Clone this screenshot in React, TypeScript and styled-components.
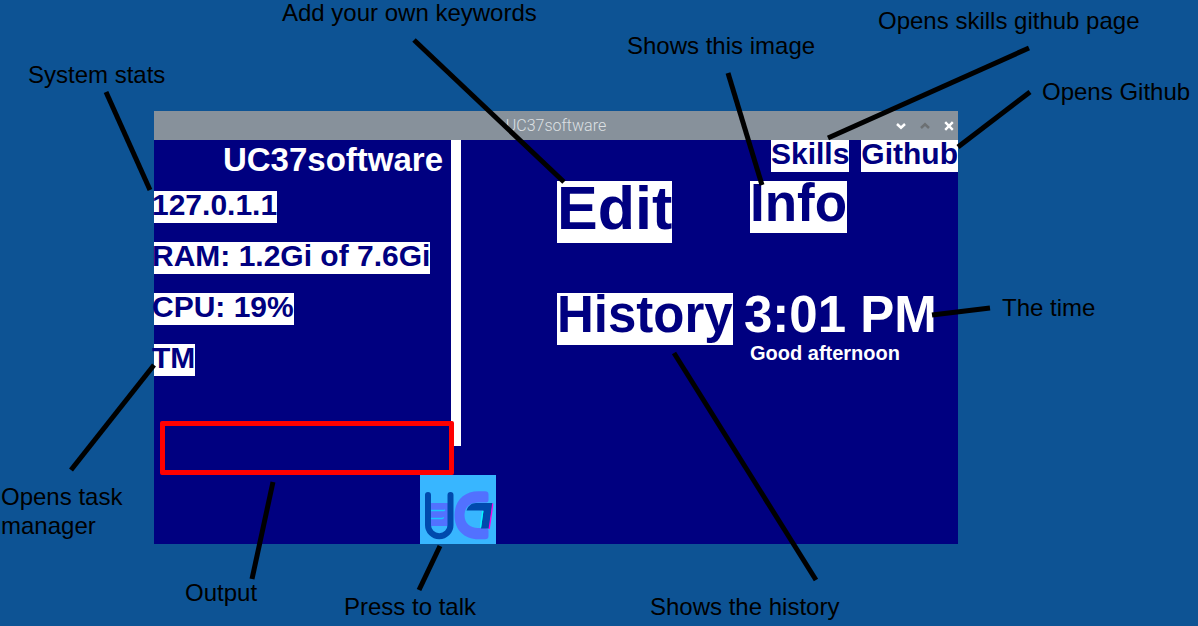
import React from "react";
import styled, { createGlobalStyle } from "styled-components";

const CANVAS = { width: 1198, height: 626 };

const navy = "#000080";
const sky = "#0d5394";

const GlobalStyle = createGlobalStyle`
  *, *::before, *::after { box-sizing: border-box; }
  body {
    margin: 0;
    background: ${sky};
    font-family: "Liberation Sans", Arial, sans-serif;
  }
  button { font-family: inherit; cursor: pointer; }
  h1, h2, p, ul { margin: 0; padding: 0; }
`;

const Diagram = styled.main`
  position: relative;
  display: grid;
  grid-template-columns: minmax(0, 154fr) minmax(0, 804fr) minmax(0, 240fr);
  grid-template-rows: 111fr auto 82fr;
  min-height: 100vh;
  overflow: hidden;
`;

const Lines = styled.svg`
  position: absolute;
  inset: 0;
  width: 100%;
  height: 100%;
  pointer-events: none;
  stroke: #000;
  stroke-width: 5;
`;

const Note = styled.p<{ $x: number; $y: number }>`
  position: absolute;
  left: ${(p) => (p.$x / CANVAS.width) * 100}%;
  top: ${(p) => (p.$y / CANVAS.height) * 100}%;
  color: #000;
  font-size: 24px;
  line-height: 29px;
  white-space: pre;
`;

const AppWindow = styled.section`
  grid-column: 2;
  grid-row: 2;
  display: flex;
  flex-direction: column;
  background: ${navy};
`;

const TitleBar = styled.header`
  display: grid;
  grid-template-columns: 1fr auto 1fr;
  align-items: center;
  height: 29px;
  background: #87919b;
`;

const WindowTitle = styled.h1`
  grid-column: 2;
  color: #dde0e3;
  font: 300 16px/24px Roboto, sans-serif;
`;

const WindowControls = styled.div`
  display: flex;
  justify-content: flex-end;
  gap: 6px;
`;

const ControlButton = styled.button<{ $dim?: boolean }>`
  display: flex;
  align-items: center;
  justify-content: center;
  width: 18px;
  height: 24px;
  padding: 0;
  border: 0;
  background: none;
  color: ${(p) => (p.$dim ? "#6c7073" : "#fff")};
`;

const Columns = styled.div`
  display: flex;
`;

const StatsPanel = styled.div`
  flex: 0 0 297px;
`;

const PanelTitle = styled.h2`
  padding-right: 8px;
  color: #fff;
  font-size: 33px;
  line-height: 40px;
  text-align: right;
`;

const StatList = styled.ul`
  display: flex;
  flex-direction: column;
  align-items: flex-start;
  gap: 19px;
  margin: 11px 0 45px;
  list-style: none;
  text-indent: -2px;
`;

const chip = `
  display: block;
  border: 0;
  background: #fff;
  color: ${navy};
  font-weight: 700;
  text-decoration: none;
  white-space: nowrap;
`;

const StatChip = styled.li`
  ${chip}
  padding-bottom: 4px;
  font-size: 30px;
  line-height: 28px;
`;

const TaskButton = styled.button`
  ${chip}
  padding: 0;
  font-size: 30px;
  line-height: 28px;
  text-indent: inherit;
`;

const NavLink = styled.a`
  ${chip}
  padding-bottom: 4px;
  font-size: 30px;
  line-height: 28px;
`;

const OutputBox = styled.output`
  position: relative;
  z-index: 1;
  display: block;
  height: 54px;
  margin: 0 -3px 0 6px;
  border: 5px solid #f00;
  border-radius: 2px;
`;

const Divider = styled.div`
  flex: 0 0 10px;
  margin-bottom: 29px;
  background: #fff;
`;

const MainPanel = styled.div`
  flex: 1;
  min-width: 0;
`;

const LinkBar = styled.nav`
  display: flex;
  justify-content: flex-end;
  gap: 12px;
`;

const Actions = styled.div`
  display: grid;
  grid-template-columns: 177px auto;
  justify-content: start;
  align-items: start;
  justify-items: start;
  gap: 50px 10px;
  padding: 9px 0 0 96px;
`;

const ActionButton = styled.button<{ $size: number; $indent?: boolean }>`
  ${chip}
  margin-left: ${(p) => (p.$indent ? 6 : 0)}px;
  padding: 0 0 8px;
  font-size: ${(p) => p.$size}px;
  line-height: ${(p) => (p.$size > 60 ? 54 : 44)}px;
`;

const Clock = styled.div`
  color: #fff;
  font-weight: 700;
`;

const Time = styled.p`
  padding-bottom: 6px;
  font-size: 51px;
  line-height: 44px;
  white-space: nowrap;
`;

const Greeting = styled.p`
  padding-left: 6px;
  font-size: 20px;
  line-height: 20px;
`;

const TalkRow = styled.footer`
  padding-left: 266px;
`;

const TalkButton = styled.button`
  display: block;
  width: 76px;
  height: 69px;
  padding: 0;
  border: 0;
  background: #38b6ff;
`;

const notes = [
  { text: "Add your own keywords", x: 282, y: -2 },
  { text: "System stats", x: 28, y: 60 },
  { text: "Shows this image", x: 627, y: 31 },
  { text: "Opens skills github page", x: 878, y: 6 },
  { text: "Opens Github", x: 1042, y: 77 },
  { text: "The time", x: 1002, y: 293 },
  { text: "Opens task\nmanager", x: 1, y: 482 },
  { text: "Output", x: 185, y: 578 },
  { text: "Press to talk", x: 344, y: 592 },
  { text: "Shows the history", x: 650, y: 592 },
];

const pointers = [
  [106, 92, 150, 190],
  [414, 40, 564, 182],
  [728, 73, 762, 185],
  [1029, 48, 828, 138],
  [1030, 92, 958, 147],
  [990, 308, 932, 315],
  [674, 353, 816, 580],
  [154, 365, 71, 470],
  [273, 482, 252, 579],
  [440, 546, 419, 590],
];

const stats = ["127.0.1.1", "RAM: 1.2Gi of 7.6Gi", "CPU: 19%"];

function Logo() {
  return (
    <svg width="76" height="69" viewBox="0 0 76 69" fill="none" aria-hidden="true">
      <path d="M11 28H28V51H11Z" fill="#5271ff" />
      <path d="M11 35.5H24L25 34.8M11 43.5H22L24 42.5" stroke="#19c8ff" strokeWidth="1.3" />
      <path d="M8 20V50A11 11 0 0 0 30.500 50V20" stroke="#004aad" strokeWidth="6" strokeLinecap="round" />
      <path
        d="M65 16.300H58.500C44 16.300 34.500 26 34.500 40.300S44 64.300 58.500 64.300H65Q68.500 64.300 68.500 61V56Q68.500 53 65 53H58C50 53 44.500 48 44.500 40.300S50 27.600 58 27.600H65Q68.500 27.600 68.500 25V19.500Q68.500 16.300 65 16.300Z"
        fill="#5271ff"
      />
      <path d="M46.500 35.500C48 31 51.500 28 56 28H72.500L69.300 53.600H61L63.500 35.500Z" fill="#004aad" />
      <path d="M72.700 28.500L72 35L69.200 53.800" stroke="#ff00e0" strokeWidth="1.300" />
      <path d="M62.800 36L60.500 52.500" stroke="#0ff" strokeWidth="1.300" />
    </svg>
  );
}

export default function App() {
  return (
    <>
      <GlobalStyle />
      <Diagram>
        <AppWindow>
          <TitleBar>
            <WindowTitle>UC37software</WindowTitle>
            <WindowControls>
              <ControlButton aria-label="Minimize">
                <svg width="10" height="8" viewBox="0 0 10 8" fill="none" stroke="currentColor" strokeWidth="2.500">
                  <path d="M1 2L5 5.700L9 2" />
                </svg>
              </ControlButton>
              <ControlButton $dim aria-label="Maximize">
                <svg width="10" height="8" viewBox="0 0 10 8" fill="none" stroke="currentColor" strokeWidth="2.500">
                  <path d="M1 6L5 2.300L9 6" />
                </svg>
              </ControlButton>
              <ControlButton aria-label="Close">
                <svg width="10" height="10" viewBox="0 0 10 10" fill="none" stroke="currentColor" strokeWidth="2.400">
                  <path d="M1.200 1.200L8.800 8.800M8.800 1.200L1.200 8.800" />
                </svg>
              </ControlButton>
            </WindowControls>
          </TitleBar>

          <Columns>
            <StatsPanel>
              <PanelTitle>UC37software</PanelTitle>
              <StatList>
                {stats.map((stat) => (
                  <StatChip key={stat}>{stat}</StatChip>
                ))}
                <StatChip>
                  <TaskButton>TM</TaskButton>
                </StatChip>
              </StatList>
              <OutputBox aria-label="Output" />
            </StatsPanel>
            <Divider />
            <MainPanel>
              <LinkBar>
                <NavLink href="#skills">Skills</NavLink>
                <NavLink href="#github">Github</NavLink>
              </LinkBar>
              <Actions>
                <ActionButton $size={61}>Edit</ActionButton>
                <ActionButton $size={53} $indent>Info</ActionButton>
                <ActionButton $size={51}>History</ActionButton>
                <Clock>
                  <Time>3:01 PM</Time>
                  <Greeting>Good afternoon</Greeting>
                </Clock>
              </Actions>
            </MainPanel>
          </Columns>

          <TalkRow>
            <TalkButton aria-label="Press to talk">
              <Logo />
            </TalkButton>
          </TalkRow>
        </AppWindow>

        <Lines viewBox={`0 0 ${CANVAS.width} ${CANVAS.height}`} preserveAspectRatio="none" aria-hidden="true">
          {pointers.map(([x1, y1, x2, y2]) => (
            <line key={`${x1}-${y1}`} x1={x1} y1={y1} x2={x2} y2={y2} />
          ))}
        </Lines>
        {notes.map((note) => (
          <Note key={note.text} $x={note.x} $y={note.y}>
            {note.text}
          </Note>
        ))}
      </Diagram>
    </>
  );
}
